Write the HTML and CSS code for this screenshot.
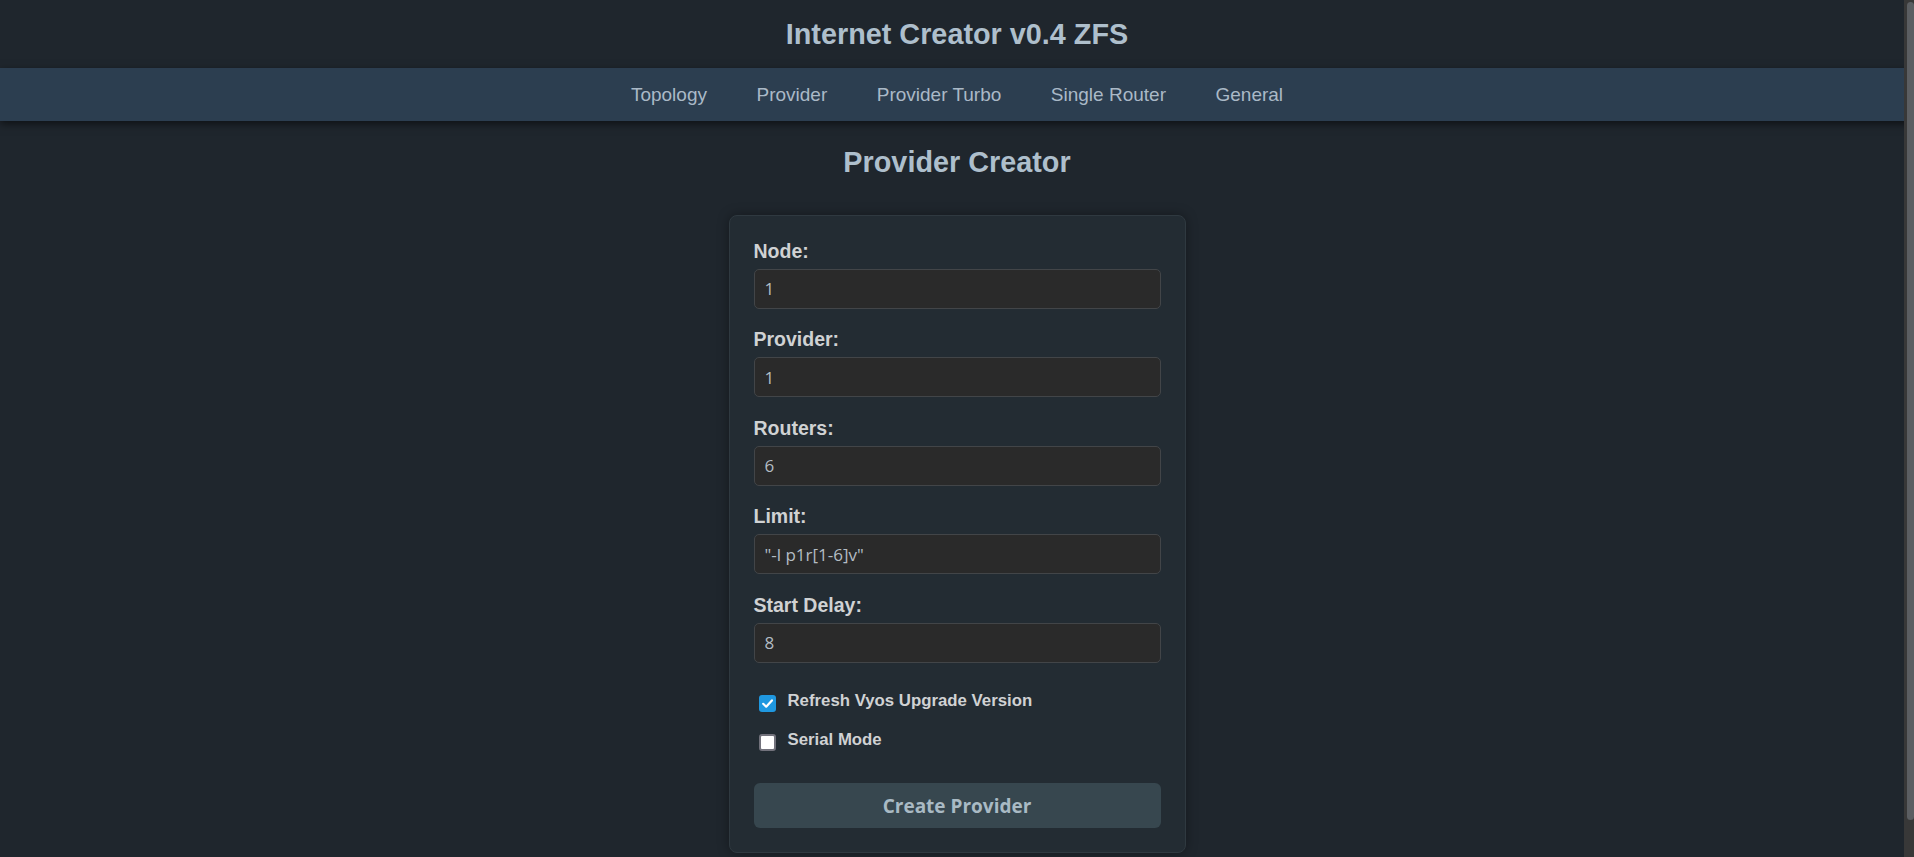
FILE: index.html
```html
<!DOCTYPE html>
<html lang="en">
<head>
<meta charset="utf-8">
<title>Internet Creator v0.4 ZFS</title>
<link rel="stylesheet" href="styles.css">
</head>
<body>
  <header class="site-header">
    <h1 class="site-title">Internet Creator v0.4 ZFS</h1>
  </header>
  <nav class="main-nav">
    <a class="nav-link" href="#">Topology</a>
    <a class="nav-link" href="#">Provider</a>
    <a class="nav-link" href="#">Provider Turbo</a>
    <a class="nav-link" href="#">Single Router</a>
    <a class="nav-link" href="#">General</a>
  </nav>
  <main class="content">
    <h2 class="page-title">Provider Creator</h2>
    <form class="card">
      <div class="field">
        <label class="field-label" for="node">Node:</label>
        <input class="field-input" id="node" type="text" value="1">
      </div>
      <div class="field">
        <label class="field-label" for="provider">Provider:</label>
        <input class="field-input" id="provider" type="text" value="1">
      </div>
      <div class="field">
        <label class="field-label" for="routers">Routers:</label>
        <input class="field-input" id="routers" type="text" value="6">
      </div>
      <div class="field">
        <label class="field-label" for="limit">Limit:</label>
        <input class="field-input" id="limit" type="text" value="&quot;-l p1r[1-6]v&quot;">
      </div>
      <div class="field">
        <label class="field-label" for="delay">Start Delay:</label>
        <input class="field-input" id="delay" type="text" value="8">
      </div>
      <div class="checks">
        <label class="check">
          <input class="check-input" type="checkbox" checked>
          <span class="check-box is-checked">
            <svg viewBox="0 0 17 17" width="17" height="17" aria-hidden="true"><path d="M4.2 8.8 L7.2 11.7 L12.9 5.4" fill="none" stroke="#ffffff" stroke-width="2.2" stroke-linecap="round" stroke-linejoin="round"/></svg>
          </span>
          <span class="check-text">Refresh Vyos Upgrade Version</span>
        </label>
        <label class="check">
          <input class="check-input" type="checkbox">
          <span class="check-box"></span>
          <span class="check-text">Serial Mode</span>
        </label>
      </div>
      <button class="submit" type="button">Create Provider</button>
    </form>
  </main>
  <div class="scrollbar" aria-hidden="true"><div class="scrollbar-thumb"></div></div>
</body>
</html>
```
FILE: styles.css
```css
html {
  background: #1f262d;
}
body {
  margin: 0;
  background: #1f262d;
  font-family: "Liberation Sans", Arial, sans-serif;
  color: #cfd2d4;
}
.site-header {
  height: 68px;
  text-align: center;
}
.site-title {
  margin: 0;
  font-size: 28.8px;
  line-height: 68px;
  font-weight: bold;
  color: #aebfcc;
}
.main-nav {
  height: 53px;
  background: #2c3e50;
  display: flex;
  justify-content: center;
  align-items: center;
  gap: 49.5px;
  box-shadow: 0 3px 8px rgba(0, 0, 0, 0.55);
  position: relative;
}
.nav-link {
  font-size: 19px;
  line-height: 53px;
  color: #aab9c7;
  text-decoration: none;
}
.content {
  display: flex;
  flex-direction: column;
  align-items: center;
  padding-bottom: 46px;
}
.page-title {
  margin: 24px 0 36px;
  font-size: 28.8px;
  line-height: 34px;
  font-weight: bold;
  color: #aebfcc;
}
.card {
  box-sizing: border-box;
  width: 457px;
  padding: 22.5px 24px 24px;
  background: #232c33;
  border: 1px solid #2f3940;
  border-radius: 8px;
  box-shadow: 0 0 12px rgba(0, 0, 0, 0.35);
}
.field {
  margin-bottom: 18.5px;
}
.field-label {
  display: block;
  font-size: 19.5px;
  line-height: 24px;
  font-weight: bold;
  color: #d0d2d3;
  margin-bottom: 6px;
}
.field-input {
  box-sizing: border-box;
  display: block;
  width: 100%;
  height: 40px;
  margin: 0;
  padding: 0 10px;
  background: #2a2a2a;
  border: 1px solid #424548;
  border-radius: 5px;
  font-family: "Open Sans", "Noto Sans", sans-serif;
  font-size: 17px;
  color: #b3bcc4;
  outline: none;
}
.checks {
  display: flex;
  flex-direction: column;
  gap: 17px;
  padding-top: 9px;
}
.check {
  display: flex;
  align-items: flex-start;
  gap: 12px;
  padding-left: 5px;
  cursor: pointer;
}
.check-input {
  position: absolute;
  opacity: 0;
  width: 0;
  height: 0;
  margin: 0;
}
.check-box {
  box-sizing: border-box;
  width: 17px;
  height: 17px;
  margin-top: 5px;
  flex: none;
  background: #ffffff;
  border: 2px solid #72727c;
  border-radius: 3px;
  display: flex;
}
.check-box.is-checked {
  background: #1f98e0;
  border: none;
}
.check-text {
  font-size: 16.8px;
  line-height: 21px;
  font-weight: bold;
  color: #d0d2d3;
}
.submit {
  display: block;
  width: 100%;
  height: 45px;
  margin-top: 32px;
  padding: 0;
  background: #37474f;
  border: none;
  border-radius: 6px;
  font-family: "Open Sans", "Noto Sans", sans-serif;
  font-size: 19px;
  font-weight: bold;
  color: #a9bac4;
  cursor: pointer;
}
.scrollbar {
  position: fixed;
  top: 0;
  right: 0;
  bottom: 0;
  width: 10px;
  background: #383838;
}
.scrollbar-thumb {
  position: absolute;
  top: 2px;
  right: 0;
  width: 7px;
  height: 818px;
  background: #5b5e62;
  border-radius: 4px;
}
```
